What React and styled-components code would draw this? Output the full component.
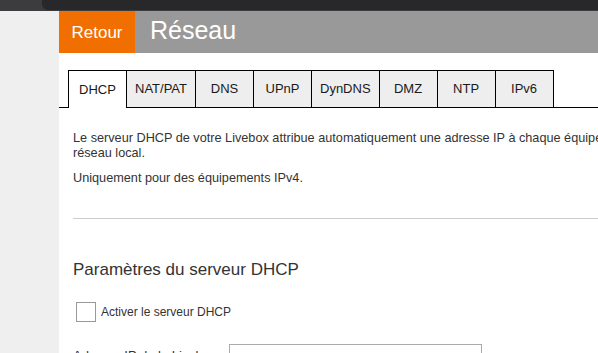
import styled, { createGlobalStyle } from 'styled-components'

const GlobalStyle = createGlobalStyle`
  html, body {
    margin: 0;
    padding: 0;
    overflow: hidden;
    background: #efefef;
    font-family: "Liberation Sans", Arial, sans-serif;
  }
`

const tabs = ['DHCP', 'NAT/PAT', 'DNS', 'UPnP', 'DynDNS', 'DMZ', 'NTP', 'IPv6']

const App = () => {
  return (
    <>
      <GlobalStyle />
      <Chrome>
        <ChromeTab />
      </Chrome>
      <Page>
        <Sidebar />
        <Content>
          <Header>
            <BackBTN>Retour</BackBTN>
            <Title>Réseau</Title>
          </Header>
          <TabRow>
            {tabs.map((t, i) => (
              <Tab key={t} active={i === 0}>{t}</Tab>
            ))}
          </TabRow>
          <Body>
            <Text>
              Le serveur DHCP de votre Livebox attribue automatiquement une adresse IP à chaque équipement connecté au
              <br />réseau local.
            </Text>
            <Text>Uniquement pour des équipements IPv4.</Text>
            <Divider />
            <Heading>Paramètres du serveur DHCP</Heading>
            <CheckRow>
              <CheckBox />
              <CheckLabel>Activer le serveur DHCP</CheckLabel>
            </CheckRow>
            <FieldRow>
              <FieldLabel>Adresse IP de la Livebox</FieldLabel>
              <Input readOnly value="192.168.1.1" />
            </FieldRow>
          </Body>
        </Content>
      </Page>
    </>
  )
}

const Chrome = styled.div`
  height: 11px;
  background: #3c3c3f;
  display: flex;
  padding-left: 42px;
`

const ChromeTab = styled.div`
  flex: 1;
  height: 10px;
  background: #28282b;
  border-bottom-left-radius: 6px;
`

const Page = styled.div`
  display: flex;
  height: 342px;
`

const Sidebar = styled.div`
  width: 59px;
  flex-shrink: 0;
  background: #efefef;
`

const Content = styled.div`
  flex: 1;
  min-width: 700px;
  background: #fff;
`

const Header = styled.div`
  display: flex;
  height: 42px;
`

const BackBTN = styled.div`
  width: 76px;
  background: #f16e00;
  color: #fff;
  font-size: 17px;
  display: flex;
  align-items: center;
  justify-content: center;
  padding-top: 2px;
  box-sizing: border-box;
`

const Title = styled.div`
  flex: 1;
  background: #999;
  color: #fff;
  font-size: 25px;
  padding-left: 15px;
  display: flex;
  align-items: center;
  padding-bottom: 4px;
`

const TabRow = styled.div`
  display: flex;
  align-items: flex-end;
  margin-top: 17px;
  padding-left: 9px;
  border-bottom: 1px solid #000;
`

const Tab = styled.div`
  min-width: 59px;
  height: ${p => p.active ? '38px' : '37px'};
  margin-bottom: ${p => p.active ? '-1px' : '0'};
  margin-right: -1px;
  padding: 0 8px 1px;
  box-sizing: border-box;
  border: 1px solid #000;
  border-bottom: none;
  background: ${p => p.active ? '#fff' : '#eee'};
  color: #1a1a1a;
  font-size: 13px;
  display: flex;
  align-items: center;
  justify-content: center;
`

const Body = styled.div`
  padding: 23px 0 0 14px;
`

const Text = styled.p`
  margin: 0 0 10px;
  font-size: 12.7px;
  line-height: 15px;
  color: #333;
  white-space: nowrap;
`

const Divider = styled.hr`
  margin: 32px 0 0;
  border: none;
  border-top: 1px solid #ccc;
`

const Heading = styled.h2`
  margin: 41px 0 0;
  font-size: 17px;
  line-height: 20px;
  font-weight: normal;
  color: #333;
`

const CheckRow = styled.div`
  display: flex;
  align-items: center;
  gap: 5px;
  margin: 22px 0 0 3px;
`

const CheckBox = styled.div`
  width: 18px;
  height: 18px;
  border: 1px solid #999;
  background: #fff;
`

const CheckLabel = styled.span`
  font-size: 12px;
  color: #333;
`

const FieldRow = styled.div`
  display: flex;
  align-items: flex-start;
  margin-top: 22px;
`

const FieldLabel = styled.span`
  width: 156px;
  margin-top: 4px;
  font-size: 13px;
  color: #333;
`

const Input = styled.input`
  width: 253px;
  height: 28px;
  box-sizing: border-box;
  border: 1px solid #aaa;
  padding: 0 8px;
  font-family: "Liberation Sans", Arial, sans-serif;
  font-size: 13px;
  color: #333;
`

export default App
